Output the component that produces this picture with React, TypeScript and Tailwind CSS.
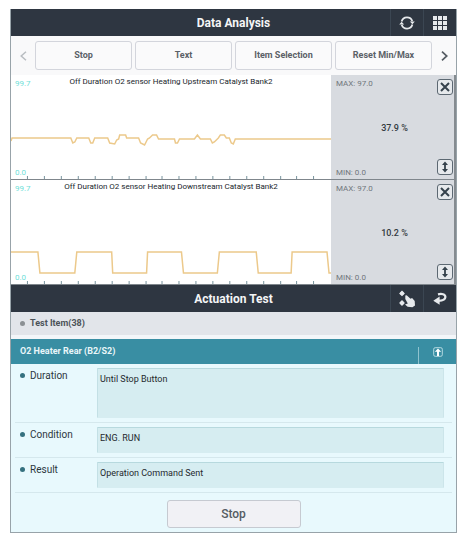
import React from 'react';

interface Sensor {
  id: string;
  title: string;
  value: string;
  trace: string;
}

interface ResultRow {
  id: string;
  label: string;
  value: string;
  boxClass: string;
}

const toolbarItems = ['Stop', 'Text', 'Item Selection', 'Reset Min/Max'];

const sensors: Sensor[] = [
  {
    id: 'upstream',
    title: 'Off Duration O2 sensor Heating Upstream Catalyst Bank2',
    value: '37.9 %',
    trace:
      '0,66 1,63 60,63 62,68 64,67 66,63 78,63 80,68 82,68 84,63 97,63 99,68 104,69 106,65 108,64 109,60 115,60 116,63 128,63 130,68 134,70 137,64 139,63 142,60 146,60 148,64 164,64 165,68 167,68 169,64 184,64 187,60 190,64 200,64 202,68 204,67 208,63 210,60 214,60 216,63 219,63 221,68 223,69 225,64 321,64',
  },
  {
    id: 'downstream',
    title: 'Off Duration O2 sensor Heating Downstream Catalyst Bank2',
    value: '10.2 %',
    trace:
      '0,72 27,72 29,93 64,93 66,72 101,72 102,93 136,93 137,72 171,72 173,93 207,93 209,72 246,72 248,93 281,93 282,72 317,72 319,93 321,93',
  },
];

const rows: ResultRow[] = [
  { id: 'duration', label: 'Duration', value: 'Until Stop Button', boxClass: 'h-[50px]' },
  { id: 'condition', label: 'Condition', value: 'ENG. RUN', boxClass: 'h-[26px]' },
  { id: 'result', label: 'Result', value: 'Operation Command Sent', boxClass: 'h-[26px]' },
];

const ticks = Array.from({ length: 18 }, (_, i) => 16 + i * 17 - Math.floor(i / 8));

const RefreshIcon = () => (
  <svg width="16" height="16" viewBox="0 0 16 16" fill="none" stroke="#e6e9ec" strokeWidth="1.8">
    <path d="M2.6 6.4A5.6 5.6 0 0 1 13.3 6.2" />
    <path d="M13.4 9.6A5.6 5.6 0 0 1 2.7 9.8" />
    <path d="M10.8 6.4h5L13.4 9.2z M5.2 9.6h-5L2.6 6.8z" fill="#e6e9ec" stroke="none" />
  </svg>
);

const GridIcon = () => (
  <svg width="14" height="14" viewBox="0 0 14 14" fill="#e6e9ec">
    {[0, 5, 10].map((y) => [0, 5, 10].map((x) => <rect key={`${x}-${y}`} x={x} y={y} width="4" height="4" />))}
  </svg>
);

const TouchIcon = () => (
  <svg width="18" height="18" viewBox="0 0 18 18" fill="#e6e9ec">
    <path d="M4 .5 6.9 3.4 4 6.3 1.1 3.4z M4 10.1 6.9 13 4 15.9 1.1 13z" />
    <circle cx="4" cy="3.4" r="1.8" />
    <circle cx="4" cy="13" r="1.8" />
    <path d="M7.3 5.8c.7-.8 1.6-.5 2.2.2l3 2.8 1.6-.8 2.6 3 .3 4.4-2.6 1.9-4.8-.6-2.6-2.3 2.8-.8-2.5-4.6z" />
  </svg>
);

const BackIcon = () => (
  <svg width="14" height="14" viewBox="0 0 14 14" fill="none">
    <path d="M5 2.4c3.6-1 7.4-.2 7.4 2.6 0 2.4-3 3.6-7.2 3.8" stroke="#e6e9ec" strokeWidth="2.2" />
    <path d="M6.6 4.6v8.2L.3 8.8z" fill="#e6e9ec" />
  </svg>
);

const CloseIcon = () => (
  <svg width="10" height="10" viewBox="0 0 10 10" fill="none" stroke="#35424c" strokeWidth="2">
    <path d="M1 1l8 8M9 1L1 9" />
  </svg>
);

const ResizeIcon = () => (
  <svg width="8" height="12" viewBox="0 0 8 12">
    <path d="M4 .5l3 3.5H4.9v4H7l-3 3.5L1 8h2.1V4H1z" fill="#35424c" />
  </svg>
);

const SensorPanel: React.FC<{ sensor: Sensor }> = ({ sensor }) => (
  <section className="flex border-b border-[#7f868c]">
    <div className="relative h-[104px] min-w-0 flex-1 bg-white">
      <svg className="block h-full w-full" viewBox="0 0 321 104" preserveAspectRatio="none">
        <polyline points={sensor.trace} fill="none" stroke="#ecc98b" strokeWidth="1.5" />
        {ticks.map((x) => (
          <path key={x} d={`M${x + 0.5} 101V104`} stroke="#76939d" strokeWidth="1" />
        ))}
      </svg>
      <h2 className="absolute inset-x-0 top-[2px] text-center text-[8px] leading-[10px] whitespace-nowrap text-[#20262c]">
        {sensor.title}
      </h2>
      <span className="absolute top-[4px] left-1 text-[8px] leading-[10px] text-[#6fe0d8]">99.7</span>
      <span className="absolute bottom-px left-1 text-[8px] leading-[10px] text-[#6fe0d8]">0.0</span>
    </div>
    <div className="flex w-[123px] bg-[#d8dbe0] pr-px pl-[5px] text-[#70767c]">
      <div className="flex flex-1 basis-0 flex-col justify-between pt-[4px] pb-px text-[8px] leading-[10px] whitespace-nowrap">
        <span>MAX: 97.0</span>
        <span>MIN: 0.0</span>
      </div>
      <p className="self-center pt-px text-[9px] leading-[12px] font-medium text-[#333a40]">{sensor.value}</p>
      <div className="flex flex-1 basis-0 flex-col items-end justify-between py-[4px]">
        <button
          type="button"
          aria-label="Close"
          className="flex size-4 items-center justify-center rounded-[3px] border border-[#5c6872] bg-[#e6e9ec]"
        >
          <CloseIcon />
        </button>
        <button
          type="button"
          aria-label="Resize"
          className="flex size-4 items-center justify-center rounded-[3px] border border-[#5c6872] bg-[#e6e9ec]"
        >
          <ResizeIcon />
        </button>
      </div>
    </div>
  </section>
);

const TitleBar: React.FC<{ title: string; children: React.ReactNode }> = ({ title, children }) => (
  <header className="flex h-[27px] items-stretch bg-[#2e3641]">
    <div className="w-[66px]" />
    <h1 className="flex flex-1 items-center justify-center text-[12px] font-bold text-[#f4f5f6]">{title}</h1>
    {children}
  </header>
);

const BarButton: React.FC<{ label: string; children: React.ReactNode }> = ({ label, children }) => (
  <button
    type="button"
    aria-label={label}
    className="flex w-[33px] items-center justify-center border-l border-[#3b4652]"
  >
    {children}
  </button>
);

const App: React.FC = () => {
  return (
    <div className="bg-white px-[10px] py-[9px] font-['Roboto','Liberation_Sans',sans-serif]">
      <main className="border border-t-0 border-[#98a3a9]">
        <TitleBar title="Data Analysis">
          <BarButton label="Refresh">
            <RefreshIcon />
          </BarButton>
          <BarButton label="Menu">
            <GridIcon />
          </BarButton>
        </TitleBar>

        {/* Toolbar */}
        <nav className="flex h-[39px] items-center bg-[#f9f9fa]">
          <button type="button" aria-label="Previous" className="flex w-6 items-center justify-center">
            <svg width="7" height="10" viewBox="0 0 7 10" fill="none" stroke="#b9bdc1" strokeWidth="1.5">
              <path d="M6 .7L1.2 5 6 9.3" />
            </svg>
          </button>
          <div className="flex flex-1 gap-[3px]">
            {toolbarItems.map((item) => (
              <button
                key={item}
                type="button"
                className="h-[29px] flex-1 basis-0 rounded-[3px] border border-[#d3d5dc] bg-[#fafafb] text-[9px] font-bold whitespace-nowrap text-[#5b6167]"
              >
                {item}
              </button>
            ))}
          </div>
          <button type="button" aria-label="Next" className="flex w-6 items-center justify-center">
            <svg width="7" height="10" viewBox="0 0 7 10" fill="none" stroke="#555c63" strokeWidth="1.7">
              <path d="M1 .7L5.8 5 1 9.3" />
            </svg>
          </button>
        </nav>

        <div className="border-r-2 border-[#858b90]">
          {sensors.map((sensor) => (
            <SensorPanel key={sensor.id} sensor={sensor} />
          ))}
        </div>

        <TitleBar title="Actuation Test">
          <BarButton label="Select item">
            <TouchIcon />
          </BarButton>
          <BarButton label="Back">
            <BackIcon />
          </BarButton>
        </TitleBar>

        <div className="flex h-[23px] items-center gap-[5px] bg-[#e2e5ea] pl-[9px]">
          <span className="size-[5px] rounded-full bg-[#8b9094]" />
          <h2 className="text-[9px] font-bold text-[#4c5359]">Test Item(38)</h2>
        </div>
        <div className="h-1 bg-[#f3f6f9]" />

        <div className="flex h-[25px] items-center justify-between bg-[#398ea3] pl-[9px]">
          <h3 className="text-[9px] font-bold text-[#e9f6f9]">O2 Heater Rear (B2/S2)</h3>
          <div className="flex h-full w-[38px] items-end">
            <div className="h-[17px] w-px bg-[#8fc3cf]" />
            <button type="button" aria-label="Collapse" className="flex h-full flex-1 items-center justify-center">
              <svg width="10" height="10" viewBox="0 0 10 10" fill="none">
                <rect x=".7" y=".7" width="8.6" height="8.6" rx="1.5" stroke="#b5dae1" />
                <path d="M5 1.5l3.2 3.3H6V9H4V4.8H1.8z" fill="#ffffff" />
              </svg>
            </button>
          </div>
        </div>

        <div className="bg-[#e8f9fd] px-1 pt-1 pb-[4px]">
          <dl>
            {rows.map((row) => (
              <div key={row.id} className="mb-1 flex border-b border-[#d5e8ed] pr-2 pb-1">
                <dt className="flex h-[14px] w-[82px] items-center gap-[5px] pl-[5px] text-[10px] text-[#2c373d]">
                  <span className="size-[5px] rounded-full bg-[#35717f]" />
                  {row.label}
                </dt>
                <dd
                  className={`${row.boxClass} flex-1 rounded-[1px] border border-t-[#b7d9de] border-r-[#cce5ea] border-b-[#d6edf1] border-l-[#c3e0e5] bg-[#d6edf1] px-[2px] pt-[4px] text-[9px] leading-[12px] text-[#1f292e]`}
                >
                  {row.value}
                </dd>
              </div>
            ))}
          </dl>
          <div className="flex justify-center pt-[3px]">
            <button
              type="button"
              className="h-7 w-[134px] rounded-[3px] border border-[#c6cad1] bg-[#f1f1f5] text-[12px] font-medium text-[#555c63]"
            >
              Stop
            </button>
          </div>
        </div>
      </main>
    </div>
  );
};

export default App;
